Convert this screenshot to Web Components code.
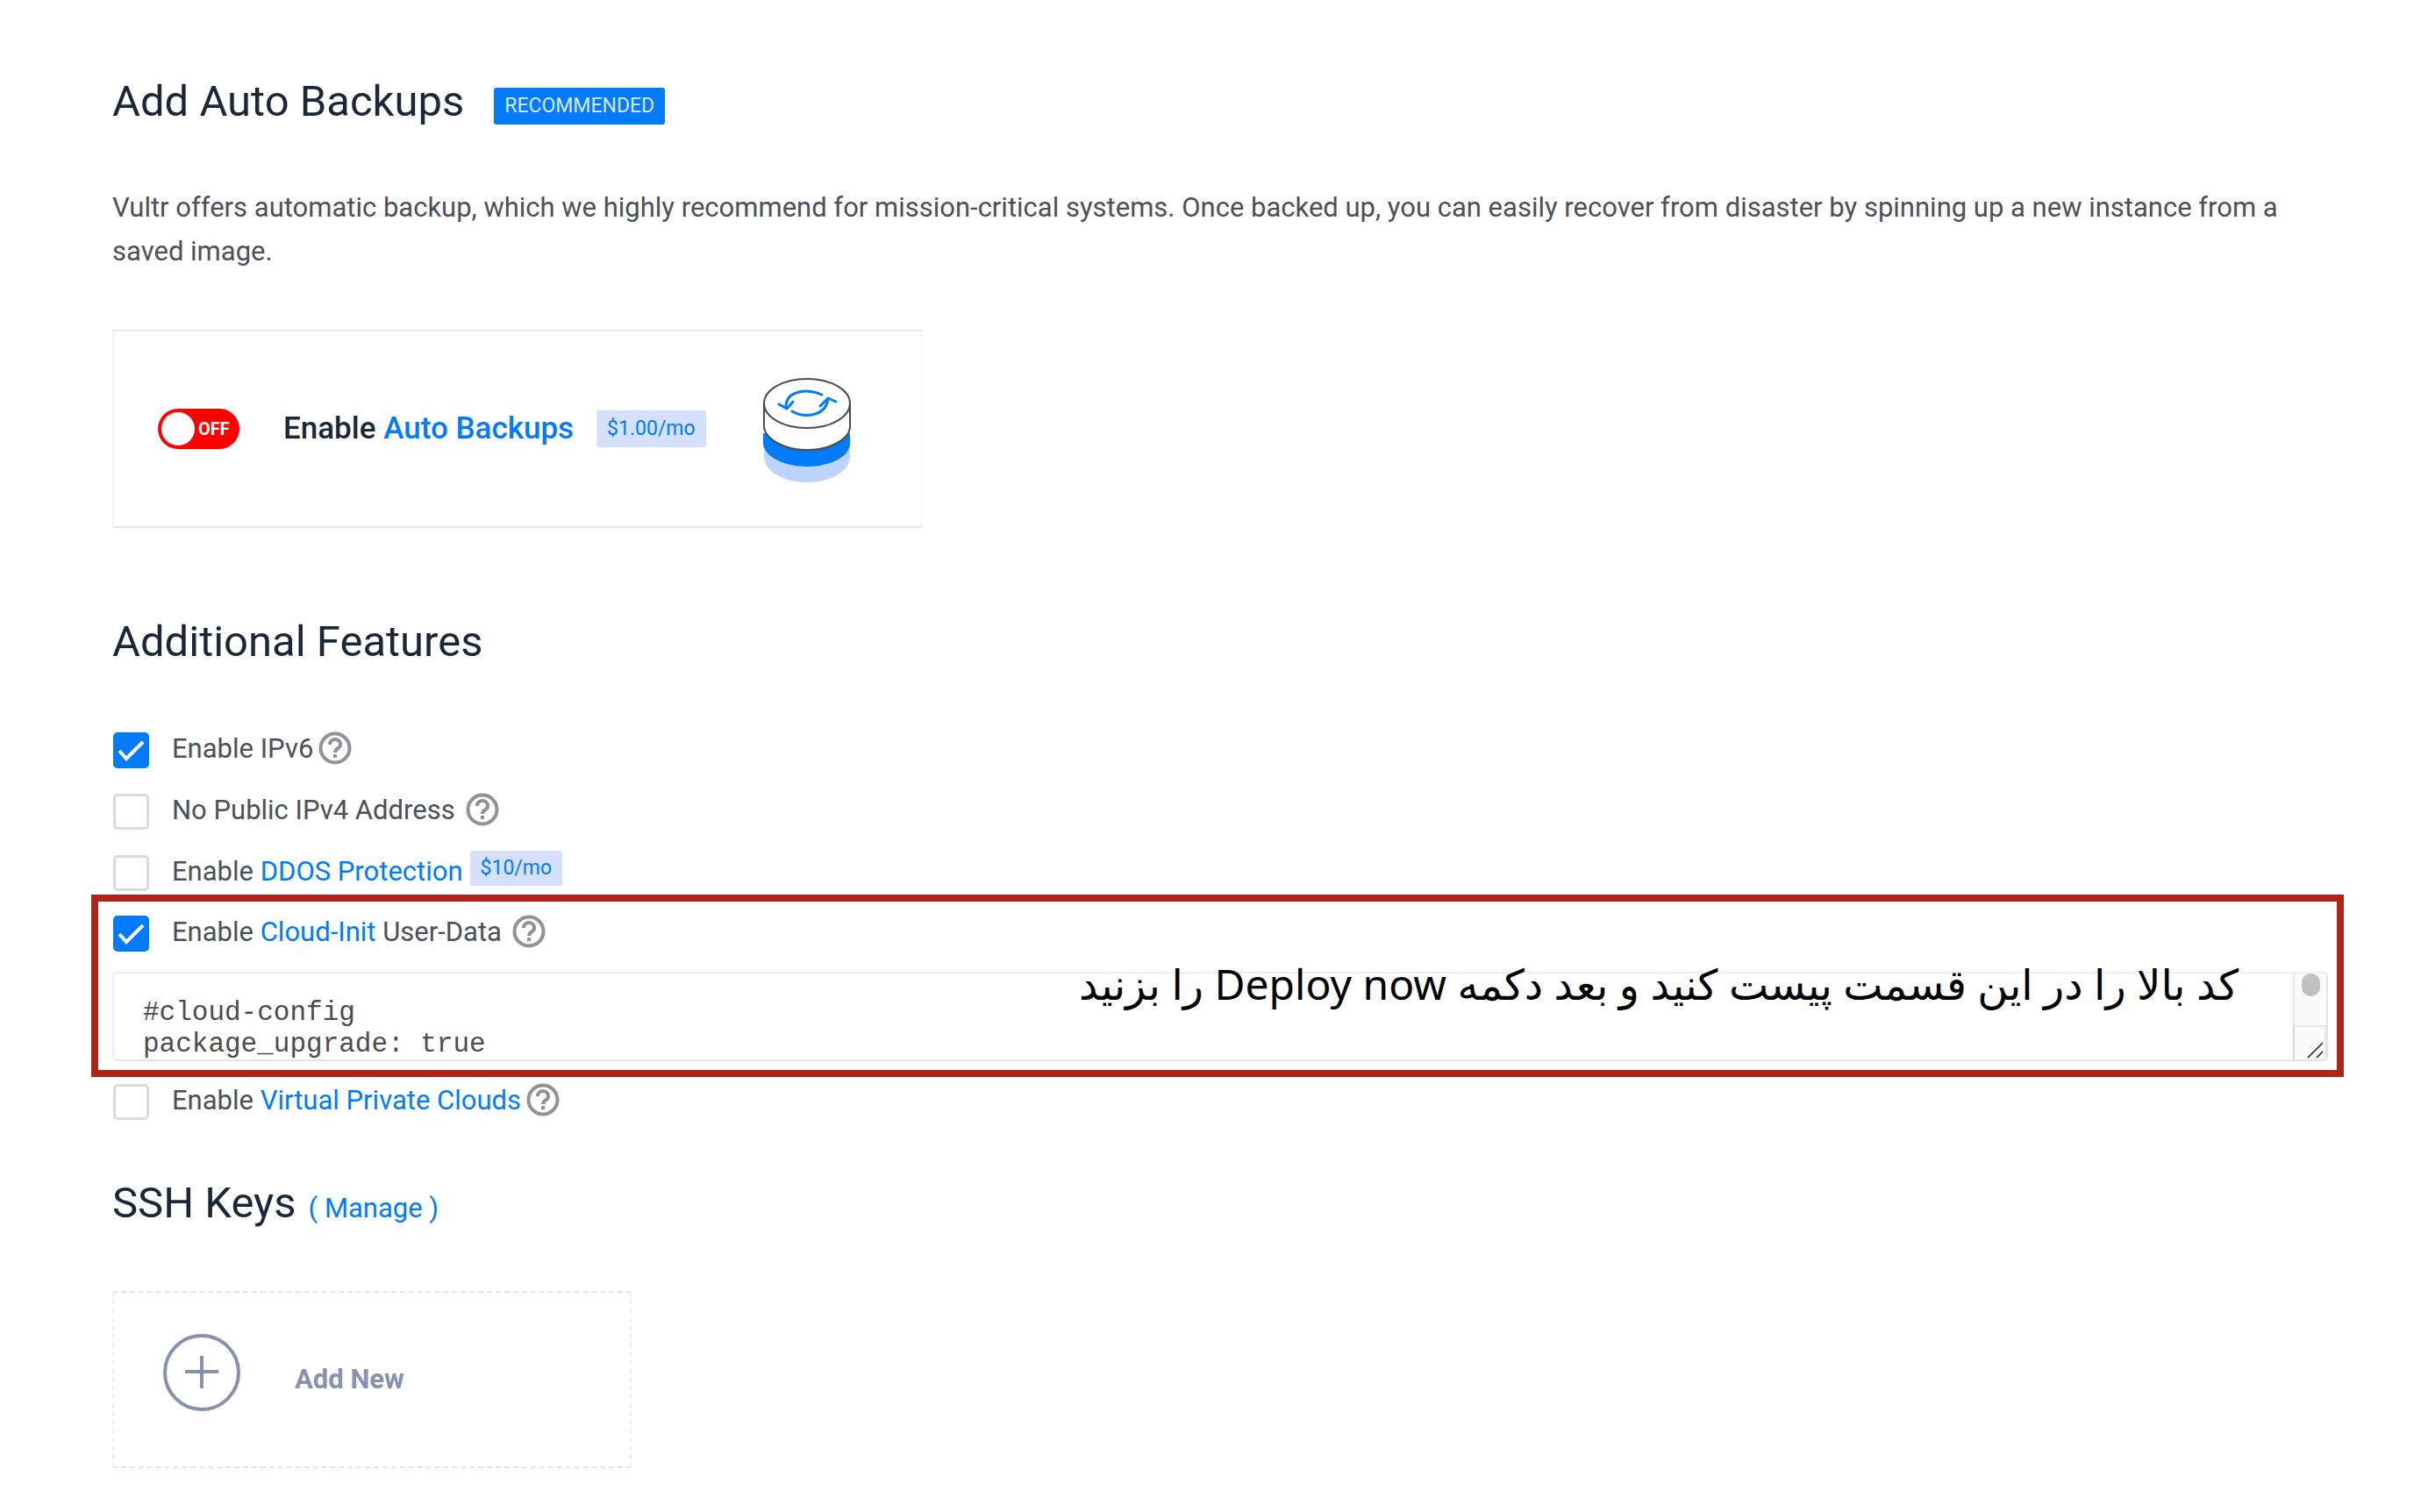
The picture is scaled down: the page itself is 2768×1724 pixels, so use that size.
<!DOCTYPE html>
<html lang="en">
<head>
<meta charset="utf-8">
<title>Deploy instance</title>
<style>
  html, body { margin: 0; background: #fff; }
  body { font-family: Roboto, "Liberation Sans", sans-serif; font-size: 31px; line-height: 50px; color: #4b5059; }
  a { color: #007bfc; text-decoration: none; }
</style>
</head>
<body>
<deploy-page>
  <section-title>Add Auto Backups<price-tag slot="extra" solid>RECOMMENDED</price-tag></section-title>
  <intro-text>Vultr offers automatic backup, which we highly recommend for mission-critical systems. Once backed up, you can easily recover from disaster by spinning up a new instance from a saved image.</intro-text>
  <backup-card>Enable <a href="#backups">Auto Backups</a></backup-card>

  <section-title class="features">Additional Features</section-title>
  <feature-list>
    <feature-row checked help="tight">Enable IPv6</feature-row>
    <feature-row help="wide">No Public IPv4 Address</feature-row>
    <feature-row>Enable <a href="#ddos">DDOS Protection</a><price-tag slot="tag" raised>$10/mo</price-tag></feature-row>
    <marked-area>
      <feature-row checked help="wide">Enable <a href="#cloud-init">Cloud-Init</a> User-Data</feature-row>
      <user-data></user-data>
      <span slot="note" lang="fa" dir="rtl">کد بالا را در این قسمت پیست کنید و بعد دکمه Deploy now را بزنید</span>
    </marked-area>
    <feature-row help="tight">Enable <a href="#vpc">Virtual Private Clouds</a></feature-row>
  </feature-list>

  <section-title class="keys">SSH Keys<a slot="link" href="#manage">( Manage )</a></section-title>
  <add-key></add-key>
</deploy-page>

<script>
  const define = (name, html, setup) => {
    const template = document.createElement('template');
    template.innerHTML = html;
    customElements.define(name, class extends HTMLElement {
      constructor() {
        super();
        this.attachShadow({ mode: 'open' }).append(template.content.cloneNode(true));
      }
      connectedCallback() { if (setup) setup(this, this.shadowRoot); }
    });
  };

  define('deploy-page', `
    <style>
      :host { display: block; }
      main { display: flex; flex-direction: column; padding: 84px 112px 50px 128px; }
      ::slotted(intro-text) { margin-top: 64px; }
      ::slotted(backup-card) { margin-top: 64px; }
      ::slotted(.features) { margin-top: 98px; }
      ::slotted(feature-list) { margin-top: 65px; }
      ::slotted(.keys) { margin-top: 60px; }
      ::slotted(add-key) { margin-top: 68px; }
    </style>
    <main><slot></slot></main>`);

  define('section-title', `
    <style>
      :host { display: flex; align-items: center; color: #1b2638; }
      h2 { margin: 0; font-weight: 400; font-size: 49px; line-height: 64px; }
      ::slotted([slot=extra]) { margin: 10px 0 0 34px; }
      ::slotted([slot=link]) { margin-left: 14px; font-size: 31px; line-height: 32px; }
    </style>
    <h2><slot></slot><slot name="link"></slot></h2><slot name="extra"></slot>`);

  define('intro-text', `
    <style>:host { display: block; } p { margin: 0; padding-right: 24px; }</style>
    <p><slot></slot></p>`);

  define('price-tag', `
    <style>
      :host { display: block; box-sizing: border-box; height: 42px; padding: 0 12px; border-radius: 3px;
        background: #d4e0fc; color: #007bfc; font-size: 23px; font-weight: 400; line-height: 42px; white-space: nowrap; }
      :host([solid]) { background: #007bfc; color: #dce8fd; }
      :host([raised]) { height: 40px; line-height: 40px; }
    </style>
    <slot></slot>`);

  define('backup-card', `
    <style>
      :host { display: flex; align-items: center; box-sizing: border-box; width: 924px; height: 226px; padding: 0 50px;
        border: 2px solid #e6e6ec; border-left-color: #f4f4f7; border-right-color: #f9f9fb; }
      .switch { display: flex; align-items: center; box-sizing: border-box; width: 93px; height: 46px; padding: 4px; border: 0;
        border-radius: 23px; background: #f00; color: #fff; font: 700 20px/38px Roboto, sans-serif; }
      .switch i { width: 38px; height: 38px; margin-right: 4px; border-radius: 50%; background: #fff; }
      .label { margin-left: 50px; font-size: 35px; font-weight: 500; color: #1b2638; white-space: nowrap; }
      price-tag { margin-left: 26px; }
      svg { margin: 4px 0 0 64px; }
    </style>
    <button class="switch" type="button" role="switch" aria-checked="false"><i></i>OFF</button>
    <span class="label"><slot></slot></span>
    <price-tag>$1.00/mo</price-tag>
    <svg width="102" height="124" viewBox="0 0 102 124" fill="none">
      <path d="M2 84v8c0 16 22 29 49 29s49-13 49-29v-8z" fill="#bcd4ff"/>
      <path d="M1 65v12c1 14 23 26 50 26s49-12 49-26V65z" fill="#007bfc"/>
      <path d="M2 31v28c3 14 24 25 49 25s47-11 49-25V31z" fill="#fff" stroke="#4b4b50" stroke-width="2"/>
      <ellipse cx="51" cy="31" rx="49" ry="28" fill="#fff" stroke="#4b4b50" stroke-width="2"/>
      <g stroke="#007bfc" stroke-width="3" stroke-linecap="round" stroke-linejoin="round">
        <path d="M68 21c-14-7-42-6-41 15M19 32l9 5 7-8"/>
        <path d="M34 40c14 8 39 6 41-15M66 34l9-9 9 4"/>
      </g>
    </svg>`);

  define('feature-list', `
    <style>
      :host { display: flex; flex-direction: column; }
      ::slotted(feature-row) { margin-bottom: 20px; }
      ::slotted(feature-row:nth-of-type(3)) { margin-bottom: 1px; }
      ::slotted(feature-row:last-of-type) { margin-bottom: 0; }
      ::slotted(marked-area) { margin: 0 -16px 2px -24px; }
    </style>
    <slot></slot>`);

  define('feature-row', `
    <style>
      :host { display: flex; align-items: center; height: 50px; }
      .box { display: grid; margin: 2px 26px 0 1px; }
      input, .box svg { grid-area: 1 / 1; width: 41px; height: 41px; margin: 0; }
      input { appearance: none; box-sizing: border-box; border: 3px solid #dadbdd; border-radius: 5px; background: #fff; }
      input:checked { border-color: #007bfc; background: #007bfc; }
      .box svg { visibility: hidden; pointer-events: none; }
      input:checked + svg { visibility: visible; }
      label { white-space: pre; }
      .help { display: none; width: 38px; height: 38px; padding: 0; border: 0; background: none; }
      .help svg { display: block; }
      :host([help]) .help { display: block; margin: 0 0 2px 6px; }
      :host([help=wide]) .help { margin-left: 12px; }
      ::slotted(price-tag) { margin: -8px 0 0 8px; }
    </style>
    <span class="box">
      <input type="checkbox" id="option">
      <svg viewBox="0 0 41 41" fill="none"><path d="M7 21l8 9 19-19" stroke="#fff" stroke-width="4"/></svg>
    </span>
    <label for="option"><slot></slot></label>
    <button class="help" type="button" aria-label="Help">
      <svg width="38" height="38" viewBox="0 0 38 38" fill="none" stroke="#919196">
        <circle cx="19" cy="19" r="16.5" stroke-width="4"/>
        <path d="M13 15c0-8 12-8 12 0 0 5-6 4-6 9" stroke-width="4"/>
        <path d="M19 26v4" stroke-width="4"/>
      </svg>
    </button>
    <slot name="tag"></slot>`,
    (host, root) => { root.querySelector('input').checked = host.hasAttribute('checked'); });

  define('marked-area', `
    <style>
      :host { display: block; position: relative; border: 8px solid #b02318; padding: 10px 10px 10px 16px; }
      ::slotted(user-data) { margin-top: 20px; }
      ::slotted([slot=note]) { position: absolute; right: 112px; top: 54px; font: 400 48px/80px "Noto Sans", "DejaVu Sans", sans-serif; color: #000; white-space: nowrap; }
    </style>
    <slot></slot><slot name="note"></slot>`);

  define('user-data', `
    <style>
      :host { display: flex; box-sizing: border-box; height: 102px; border: 2px solid #e4e4e4; border-top-color: #efefef; border-left-color: #efefef; border-radius: 5px; overflow: hidden; }
      textarea { flex: 1; box-sizing: border-box; border: 0; outline: 0; margin: 0; padding: 27px 33px 0; resize: none; overflow: hidden;
        background: none; color: #4c4c4c; font: 400 31px/36px "Liberation Mono", monospace; }
      .bar { display: flex; flex-direction: column; width: 38px; background: #fafafa; }
      .track { flex: 1; display: flex; justify-content: center; border-left: 2px solid #e8e8e8; }
      .thumb { width: 21px; height: 26px; border-radius: 11px; background: #c1c1c1; }
      .grip { display: flex; justify-content: flex-end; align-items: flex-end; box-sizing: border-box; height: 39px; border: 2px solid #e8e8e8; border-left-color: #d6d6d6; border-bottom: 0; }
    </style>
    <textarea aria-label="User data">#cloud-config
package_upgrade: true</textarea>
    <div class="bar">
      <div class="track"><div class="thumb"></div></div>
      <div class="grip"><svg width="20" height="20" viewBox="0 0 20 20" stroke="#505050" stroke-width="2"><path d="M1 18L18 1M11 18l7-7"/></svg></div>
    </div>`);

  define('add-key', `
    <style>
      :host { display: block; }
      button { display: flex; align-items: center; box-sizing: border-box; width: 592px; height: 202px; padding: 0 56px;
        border: 2px dashed #e4e4e4; border-inline-color: #f0f0f0; background: none; color: #8692b0; font: 700 31px/50px Roboto, sans-serif; }
      svg { margin: 0 62px 16px 0; }
    </style>
    <button type="button">
      <svg width="88" height="88" viewBox="0 0 88 88" fill="none" stroke="#8692b0" stroke-width="4"><circle cx="44" cy="44" r="42"/><path d="M25 43h38M44 25v37"/></svg>
      Add New
    </button>`);
</script>
</body>
</html>
